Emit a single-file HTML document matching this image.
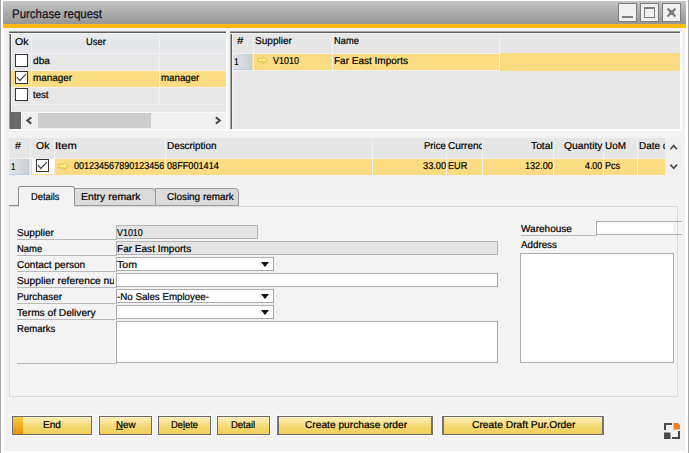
<!DOCTYPE html>
<html><head><meta charset="utf-8">
<style>
*{box-sizing:border-box;margin:0;padding:0}
html,body{width:689px;height:453px;overflow:hidden;background:#fff}
body{position:relative;font-family:"Liberation Sans",sans-serif;font-size:10px;color:#000;text-rendering:geometricPrecision}
.a{position:absolute}
.t{position:absolute;white-space:nowrap;line-height:13px;height:13px;-webkit-text-stroke:0.2px #000}
.t span{display:inline-block;transform-origin:0 0}
#edgeL{left:0;top:0;width:1px;height:453px;background:#a8a8a8}
#edgeR{left:688px;top:0;width:1px;height:453px;background:#a8a8a8}
#title{left:3px;top:1px;width:683px;height:23px;background:linear-gradient(#c4c4c4,#969696)}
#orange{left:3px;top:24px;width:683px;height:4px;background:#fdb813}
#main{left:4px;top:28px;width:681px;height:423px;background:#f2f2f2}
.wb{position:absolute;top:3px;width:19px;height:19px;background:#f0f0f0;border:1px solid #7d7d7d}
.grid{position:absolute;background:#e7e7e7}.grid i{position:absolute;display:block}
.grid .gr{right:0;top:0;bottom:0;width:2px;background:#fbfbfb}.grid .gb{left:0;right:0;bottom:0;height:2px;background:#fbfbfb}.grid .gt{left:0;top:0;right:2px;height:3px;background:linear-gradient(#a3a3a3 33.3%,#5f5f5f 33.3%,#5f5f5f 66.6%,#f1f1f1 66.6%)}.grid .gl{left:0;top:0;bottom:2px;width:3px;background:linear-gradient(90deg,#a3a3a3 33.3%,#5f5f5f 33.3%,#5f5f5f 66.6%,#f1f1f1 66.6%)}
.hd{position:absolute;background:#e6e6e6}
.hdb{background:linear-gradient(#e9ecef,#e2e5e9 55%,#e7e9ec)}
.hl{position:absolute;background:#fcdc82}
.num{position:absolute;background:linear-gradient(90deg,#e1e5ea,#c9ced6);border-bottom:1px solid #b2cfec;border-right:1px solid #f3dfb4}
.vl{position:absolute;width:2px;background:#f1f1f1}
.hln{position:absolute;height:1px;background:#f1f1f1}
.cb{position:absolute;width:13px;height:13px;background:#fff;border:1px solid #333}
.btn{position:absolute;top:416px;height:19px;border:1px solid #6b6b6b;background:linear-gradient(#fcf0bc,#f8e498 30%,#f4d76e 58%,#f2d05a);box-shadow:0 0 0 1px #fafafa}
.inp{position:absolute;background:#fff;border:1px solid #ababab;height:14px}
.ro{position:absolute;background:#e4e4e4;border:1px solid #b4b4b4;height:14px}
.ul{position:absolute;height:1px;background:#b9b9b9;left:17px;width:100px}
.arr{position:absolute;width:0;height:0;border-left:4.5px solid transparent;border-right:4.5px solid transparent;border-top:5px solid #111}
.tab{position:absolute;top:188px;height:18px;background:#dbdbdb;border:1px solid #9c9c9c;border-radius:0 4px 0 0}
svg{position:absolute;overflow:visible}
</style></head><body>
<div class="a" id="edgeL"></div><div class="a" id="edgeR"></div>
<div class="a" id="title"></div>
<div class="a" id="orange"></div>
<div class="a" id="main"></div>
<!-- window buttons -->
<div class="wb" style="left:618px"><div class="a" style="left:3px;top:12px;width:11px;height:2px;background:#7d7d7d"></div></div>
<div class="wb" style="left:640px"><div class="a" style="left:3px;top:3px;width:11px;height:11px;border:1px solid #7d7d7d;border-top-width:2px"></div></div>
<div class="wb" style="left:662px"><svg style="left:3px;top:3px" width="11" height="11" viewBox="0 0 11 11"><path d="M1.5 1.5L9.5 9.5M9.5 1.5L1.5 9.5" stroke="#7d7d7d" stroke-width="2.2"/><rect x="3.2" y="3.2" width="4.6" height="4.6" fill="#7d7d7d"/></svg></div>

<!-- left grid -->
<div class="grid" style="left:9px;top:31px;width:219px;height:100px"><i class="gr"></i><i class="gb"></i><i class="gl"></i><i class="gt"></i></div>
<div class="hd hdb" style="left:12px;top:34px;width:214px;height:19px"></div>
<div class="hln" style="left:12px;top:53px;width:214px;height:1px"></div>
<div class="hl" style="left:11px;top:71px;width:215px;height:16px"></div>
<div class="hln" style="left:11px;top:70px;width:215px"></div>
<div class="hln" style="left:11px;top:87px;width:215px"></div>
<div class="hln" style="left:11px;top:104px;width:215px"></div>
<div class="vl" style="left:31px;top:33px;height:72px;width:1px"></div>
<div class="vl" style="left:159px;top:33px;height:72px;width:1px"></div>
<div class="cb" style="left:15px;top:54px"></div>
<div class="cb" style="left:15px;top:71px"></div>
<div class="cb" style="left:15px;top:88px"></div>
<svg style="left:15px;top:71px" width="13" height="13" viewBox="0 0 13 13"><path d="M1.9 6.1L4.8 9.5L10.9 3.2" fill="none" stroke="#444" stroke-width="1.2"/></svg>
<!-- left grid scrollbar -->
<div class="a" style="left:11px;top:112px;width:10px;height:17px;background:#6a6a6a"></div>
<div class="a" style="left:21px;top:112px;width:205px;height:17px;background:#f0f0f0;border-top:1px solid #fafafa"></div>
<div class="a" style="left:38px;top:113px;width:113px;height:15px;background:#cdcdcd"></div>

<!-- right grid -->
<div class="grid" style="left:230px;top:31px;width:452px;height:100px"><i class="gr"></i><i class="gb"></i><i class="gl"></i><i class="gt"></i></div>
<div class="hd" style="left:233px;top:34px;width:447px;height:19px"></div>
<div class="hln" style="left:232px;top:53px;width:267px;height:1px"></div><div class="hln" style="left:232px;top:70px;width:267px;height:1px"></div>
<div class="hl" style="left:254px;top:54px;width:245px;height:16px"></div><div class="hl" style="left:500px;top:53px;width:180px;height:18px"></div>
<div class="num" style="left:233px;top:54px;width:20px;height:16px"></div>
<div class="vl" style="left:253px;top:33px;height:37px;width:1px"></div>
<div class="vl" style="left:332px;top:33px;height:37px;width:1px"></div>
<div class="vl" style="left:499px;top:33px;height:38px;width:1px"></div>
<svg style="left:0;top:0" width="0" height="0"><defs><linearGradient id="ag" x1="0" y1="0" x2="0" y2="1"><stop offset="0" stop-color="#fffed8"/><stop offset="0.4" stop-color="#fdf28a"/><stop offset="1" stop-color="#eec832"/></linearGradient></defs></svg><svg class="ar" style="left:256.5px;top:56px" width="11" height="9" viewBox="0 0 11 9"><path d="M0.7 2.4H5.9V0.6L10.5 4.2L5.9 7.9V6H0.7Z" fill="url(#ag)" stroke="#d9bb4e" stroke-width="0.8"/></svg>

<!-- middle grid -->
<div class="hd" style="left:9px;top:138px;width:656px;height:20px"></div>
<div class="a" style="left:665px;top:138px;width:17px;height:37px;background:#f0f0f0"></div>
<div class="hl" style="left:55px;top:159px;width:610px;height:16px"></div>
<div class="num" style="left:9px;top:159px;width:21px;height:16px"></div>
<div class="a" style="left:31px;top:159px;width:23px;height:16px;background:#fff;border-left:1px solid #fbdb8a;border-bottom:1px solid #fbdb8a"></div>
<div class="vl" style="left:30px;top:138px;height:20px;width:1px"></div>
<div class="vl" style="left:54px;top:138px;height:37px;width:1px"></div>
<div class="vl" style="left:165px;top:138px;height:37px;width:1px"></div>
<div class="vl" style="left:372px;top:138px;height:37px;width:1px"></div>
<div class="vl" style="left:446px;top:138px;height:37px;width:1px"></div>
<div class="vl" style="left:482px;top:138px;height:37px;width:1px"></div>
<div class="vl" style="left:553px;top:138px;height:37px;width:1px"></div>
<div class="vl" style="left:603px;top:138px;height:37px;width:1px"></div>
<div class="vl" style="left:637px;top:138px;height:37px;width:1px"></div>
<div class="hln" style="left:9px;top:158px;width:656px"></div>
<div class="cb" style="left:36px;top:159px"></div>
<svg style="left:36px;top:159px" width="13" height="13" viewBox="0 0 13 13"><path d="M1.9 6.1L4.8 9.5L10.9 3.2" fill="none" stroke="#444" stroke-width="1.2"/></svg>
<svg class="ar" style="left:57.5px;top:161.5px" width="11" height="9" viewBox="0 0 11 9"><path d="M0.7 2.4H5.9V0.6L10.5 4.2L5.9 7.9V6H0.7Z" fill="url(#ag)" stroke="#d9bb4e" stroke-width="0.8"/></svg>
<svg style="left:0;top:0" width="689" height="453" viewBox="0 0 689 453"><path d="M670.4 149.2L673.7 145.6L677 149.2M670.4 164.6L673.7 168.2L677 164.6" fill="none" stroke="#4d4d4d" stroke-width="1.7"/><path d="M31.3 117.4L27.3 120.5L31.3 123.6M215.9 117.4L219.9 120.5L215.9 123.6" fill="none" stroke="#4a4a4a" stroke-width="2"/></svg>

<!-- tabs + panel -->
<div class="a" style="left:9px;top:206px;width:669px;height:191px;background:#f3f3f3;border:1px solid #dadada"></div><div class="a" style="left:9px;top:205px;width:10px;height:1px;background:#8a8a8a"></div>
<div class="tab" style="left:74px;width:82px"></div>
<div class="tab" style="left:155px;width:84px"></div>
<div class="a" style="left:18px;top:186px;width:57px;height:20px;background:#f3f3f3;border:1px solid #8e8e8e;border-bottom:none;border-radius:3px 3px 0 0"></div><div class="a" style="left:19px;top:205px;width:55px;height:2px;background:#f3f3f3"></div>

<!-- form -->
<div class="ul" style="top:239px"></div>
<div class="ul" style="top:255px"></div>
<div class="ul" style="top:271px"></div>
<div class="ul" style="top:287px"></div>
<div class="ul" style="top:303px"></div>
<div class="ul" style="top:319px"></div>
<div class="ul" style="top:363px"></div>
<div class="ro" style="left:116px;top:225px;width:142px"></div>
<div class="ro" style="left:116px;top:241px;width:382px"></div>
<div class="inp" style="left:116px;top:257px;width:158px"></div>
<div class="inp" style="left:116px;top:273px;width:382px"></div>
<div class="inp" style="left:116px;top:289px;width:158px"></div>
<div class="inp" style="left:116px;top:305px;width:158px"></div>
<div class="inp" style="left:116px;top:321px;width:382px;height:42px"></div>
<div class="arr" style="left:261px;top:262px"></div>
<div class="arr" style="left:261px;top:294px"></div>
<div class="arr" style="left:261px;top:310px"></div>

<div class="ul" style="left:521px;top:235px;width:76px"></div>
<div class="a" style="left:596px;top:221px;width:86px;height:14px;background:#f3f3f3;border:1px solid #ababab;border-right:none"></div><div class="a" style="left:677px;top:222px;width:1px;height:12px;background:#dadada"></div>
<div class="a" style="left:597px;top:222px;width:76px;height:12px;background:#fff"></div>
<div class="inp" style="left:520px;top:253px;width:154px;height:110px"></div>

<!-- buttons -->
<div class="btn" style="left:12px;width:80px"></div>
<div class="a" style="left:13px;top:417px;width:10px;height:17px;background:linear-gradient(#f9cc44,#f0900c)"></div>
<div class="btn" style="left:99px;width:53px"></div>
<div class="btn" style="left:158px;width:53px"></div>
<div class="btn" style="left:217px;width:53px"></div>
<div class="btn" style="left:277px;width:156px;border-left:2px solid #737373;border-right:2px solid #737373"></div>
<div class="btn" style="left:442px;width:162px;border-left:2px solid #737373;border-right:2px solid #737373"></div>

<!-- resize icon -->
<svg style="left:664px;top:423px" width="16" height="16" viewBox="0 0 16 16">
<path d="M0 0H8V2H2V7H0Z" fill="#4a4a4a"/>
<path d="M9.5 0H14L16 2V6.5H9.5Z" fill="#f58220"/>
<rect x="0" y="9.5" width="6.5" height="6.5" fill="#4a4a4a"/>
<path d="M16 8V16H8V14H14V8Z" fill="#4a4a4a"/>
</svg>
<div class="t" id="ttl" style="left:11.88px;top:6px;font-size:12.5px;line-height:16px;height:16px;color:#14142a;"><span style="transform:translateY(0px) scaleX(0.9187)">Purchase request</span></div>
<div class="t" id="lok" style="left:14.89px;top:35px;"><span style="transform:translateY(0.7px) scaleX(1.0535)">Ok</span></div>
<div class="t" id="luser" style="left:86.05px;top:35px;"><span style="transform:translateY(0.7px) scaleX(0.9416)">User</span></div>
<div class="t" id="ldba" style="left:32.94px;top:54px;"><span style="transform:translateY(0.7px) scaleX(1.0122)">dba</span></div>
<div class="t" id="lman" style="left:32.73px;top:71px;"><span style="transform:translateY(0.7px) scaleX(0.9914)">manager</span></div>
<div class="t" id="ltest" style="left:32.89px;top:88px;"><span style="transform:translateY(0.7px) scaleX(0.9622)">test</span></div>
<div class="t" id="lman2" style="left:161.04px;top:71px;"><span style="transform:translateY(0.7px) scaleX(0.9709)">manager</span></div>
<div class="t" id="rhash" style="left:237.11px;top:34px;"><span style="transform:translateY(0.7px) scaleX(1.1429)">#</span></div>
<div class="t" id="rsup" style="left:255.04px;top:34px;"><span style="transform:translateY(0.7px) scaleX(1.0057)">Supplier</span></div>
<div class="t" id="rname" style="left:334.41px;top:34px;"><span style="transform:translateY(0.7px) scaleX(0.9342)">Name</span></div>
<div class="t" id="r1" style="left:234.32px;top:55px;"><span style="transform:translateY(0.7px) scaleX(0.8431)">1</span></div>
<div class="t" id="rv" style="left:272.79px;top:54px;"><span style="transform:translateY(0.7px) scaleX(0.8988)">V1010</span></div>
<div class="t" id="rfar" style="left:334.36px;top:54px;"><span style="transform:translateY(0.7px) scaleX(1.0001)">Far East Imports</span></div>
<div class="t" id="mhash" style="left:14.73px;top:139px;"><span style="transform:translateY(0.7px) scaleX(1.0599)">#</span></div>
<div class="t" id="mok" style="left:35.94px;top:139px;"><span style="transform:translateY(0.7px) scaleX(1.0454)">Ok</span></div>
<div class="t" id="mitem" style="left:55.10px;top:139px;"><span style="transform:translateY(0.7px) scaleX(1.1183)">Item</span></div>
<div class="t" id="mdesc" style="left:166.87px;top:139px;"><span style="transform:translateY(0.7px) scaleX(0.9882)">Description</span></div>
<div class="t" id="mprice" style="left:424.09px;top:139px;"><span style="transform:translateY(0.7px) scaleX(0.9530)">Price</span></div>
<div class="t" id="mcur" style="left:448.16px;top:139px;width:33.84px;overflow:hidden;"><span style="transform:translateY(0.7px) scaleX(0.9965)">Currency</span></div>
<div class="t" id="mtotal" style="left:530.94px;top:139px;"><span style="transform:translateY(0.7px) scaleX(1.0291)">Total</span></div>
<div class="t" id="mqty" style="left:564.10px;top:139px;"><span style="transform:translateY(0.7px) scaleX(1.0335)">Quantity</span></div>
<div class="t" id="muom" style="left:604.92px;top:139px;"><span style="transform:translateY(0.7px) scaleX(0.9952)">UoM</span></div>
<div class="t" id="mdate" style="left:638.87px;top:139px;width:26.13px;overflow:hidden;"><span style="transform:translateY(0.7px) scaleX(0.9918)">Date of</span></div>
<div class="t" id="m1" style="left:11.37px;top:160px;"><span style="transform:translateY(0.7px) scaleX(0.7963)">1</span></div>
<div class="t" id="mit" style="left:74.03px;top:159px;width:90.47px;overflow:hidden;"><span style="transform:translateY(0.7px) scaleX(0.9021)">001234567890123456789</span></div>
<div class="t" id="mde" style="left:167.28px;top:159px;"><span style="transform:translateY(0.7px) scaleX(0.9147)">08FF001414</span></div>
<div class="t" id="mpr" style="left:422.64px;top:159px;"><span style="transform:translateY(0.7px) scaleX(0.9219)">33.00</span></div>
<div class="t" id="meur" style="left:447.92px;top:159px;"><span style="transform:translateY(0.7px) scaleX(0.9089)">EUR</span></div>
<div class="t" id="mtot" style="left:524.75px;top:159px;"><span style="transform:translateY(0.7px) scaleX(0.9074)">132.00</span></div>
<div class="t" id="mq" style="left:585.18px;top:159px;"><span style="transform:translateY(0.7px) scaleX(0.8793)">4.00</span></div>
<div class="t" id="mpcs" style="left:604.93px;top:159px;"><span style="transform:translateY(0.7px) scaleX(0.9046)">Pcs</span></div>
<div class="t" id="tdet" style="left:31.11px;top:190px;"><span style="transform:translateY(0.7px) scaleX(0.9295)">Details</span></div>
<div class="t" id="tent" style="left:80.54px;top:190px;"><span style="transform:translateY(0.7px) scaleX(1.0403)">Entry remark</span></div>
<div class="t" id="tclo" style="left:167.06px;top:190px;"><span style="transform:translateY(0.7px) scaleX(0.9937)">Closing remark</span></div>
<div class="t" id="fsup" style="left:17.04px;top:226px;"><span style="transform:translateY(0.7px) scaleX(1.0057)">Supplier</span></div>
<div class="t" id="fname" style="left:16.90px;top:242px;"><span style="transform:translateY(0.7px) scaleX(0.9439)">Name</span></div>
<div class="t" id="fcon" style="left:17.15px;top:258px;"><span style="transform:translateY(0.7px) scaleX(1.0056)">Contact person</span></div>
<div class="t" id="fref" style="left:17.03px;top:274px;width:96.97px;overflow:hidden;"><span style="transform:translateY(0.7px) scaleX(1.0252)">Supplier reference number</span></div>
<div class="t" id="fpur" style="left:16.87px;top:290px;"><span style="transform:translateY(0.7px) scaleX(0.9862)">Purchaser</span></div>
<div class="t" id="fterm" style="left:17.44px;top:306px;"><span style="transform:translateY(0.7px) scaleX(1.0174)">Terms of Delivery</span></div>
<div class="t" id="frem" style="left:16.89px;top:322px;"><span style="transform:translateY(0.7px) scaleX(0.9555)">Remarks</span></div>
<div class="t" id="vsup" style="left:117.39px;top:226px;"><span style="transform:translateY(0.7px) scaleX(0.8918)">V1010</span></div>
<div class="t" id="vname" style="left:116.86px;top:242px;"><span style="transform:translateY(0.7px) scaleX(1.0035)">Far East Imports</span></div>
<div class="t" id="vtom" style="left:117.44px;top:258px;"><span style="transform:translateY(0.7px) scaleX(1.0575)">Tom</span></div>
<div class="t" id="vpur" style="left:117.37px;top:290px;"><span style="transform:translateY(0.7px) scaleX(0.9733)">-No Sales Employee-</span></div>
<div class="t" id="fwh" style="left:521.08px;top:222px;"><span style="transform:translateY(0.7px) scaleX(1.0031)">Warehouse</span></div>
<div class="t" id="fadr" style="left:521.12px;top:238px;"><span style="transform:translateY(0.7px) scaleX(0.9785)">Address</span></div>
<div class="t" id="bend" style="left:43.11px;top:418px;"><span style="transform:translateY(0.7px) scaleX(1.0098)">End</span></div>
<div class="t" id="bnew" style="left:115.50px;top:418px;"><span style="transform:translateY(0.7px) scaleX(0.9784)"><u>N</u>ew</span></div>
<div class="t" id="bdel" style="left:171.41px;top:418px;"><span style="transform:translateY(0.7px) scaleX(0.9309)">De<u>l</u>ete</span></div>
<div class="t" id="bdet" style="left:231.40px;top:418px;"><span style="transform:translateY(0.7px) scaleX(0.9463)">Detail</span></div>
<div class="t" id="bcpo" style="left:304.65px;top:418px;"><span style="transform:translateY(0.7px) scaleX(1.0198)">Create purchase order</span></div>
<div class="t" id="bcdo" style="left:471.65px;top:418px;"><span style="transform:translateY(0.7px) scaleX(1.0284)">Create Draft Pur.Order</span></div>
</body></html>
